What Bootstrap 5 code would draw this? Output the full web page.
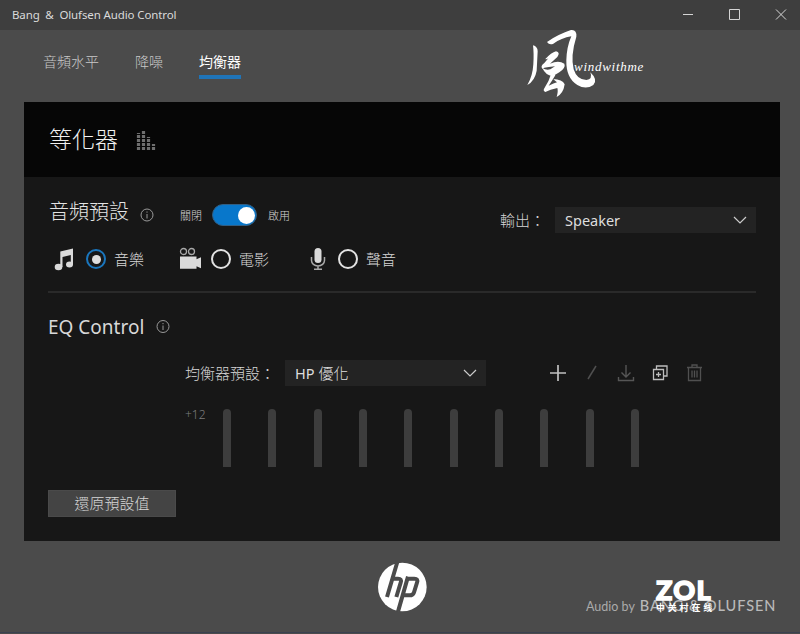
<!DOCTYPE html>
<html lang="zh-Hant">
<head>
<meta charset="utf-8">
<meta name="viewport" content="width=device-width, initial-scale=1">
<title>Bang &amp; Olufsen Audio Control</title>
<link rel="stylesheet" href="https://cdn.jsdelivr.net/npm/bootstrap@5.3.0/dist/css/bootstrap.min.css">
<style>
  body{width:800px;height:634px;overflow:hidden;background:#4b4b4b;color:#d6d6d6;font-family:"Noto Sans","Noto Sans CJK TC",sans-serif;font-size:15px;line-height:1;font-weight:300}
  svg{display:block;flex:none}
  .titlebar{height:30px;background:#3e3e3e;font-size:11.5px;padding:0 13px 0 12px;font-weight:400;color:#dadada}
  .titlebar .caption{letter-spacing:-.12px}
  .controls{gap:35px}
  .tabs{height:72px;padding:23px 0 0 43px;gap:36px;font-size:14px}
  .tabs .nav-link{padding:2px 0 6px;color:#c9c9c9;border-bottom:4px solid transparent;line-height:14px;height:26px}
  .tabs .nav-link.active{color:#fff;border-color:#1f74b8;font-weight:400}
  .panel{width:756px;height:439px;margin-left:24px;background:#171717}
  .panel-head{height:75px;background:#060606;padding-left:25px;gap:18px}
  .panel-head h1{font-size:23px;font-weight:300;color:#f2f2f2;line-height:1}
  .panel-body{padding:25px 24px 0}
  .preset-row{height:32px}
  .preset-row h2,.eq-title h2{font-size:20px;font-weight:300;color:#e4e4e4;line-height:1}
  .preset-row h2{padding-left:1px}
  .eq-title h2{font-size:19px;font-weight:400;color:#d8d8d8}
  .switch-group{padding-top:2px}
  .switch-group .info{margin:0 22px 0 11px}
  .tiny{font-size:11px;color:#d4d4d4}
  .toggle{width:45px;height:22px;border-radius:11px;background:#0877cb;border:1px solid #315e83;padding-right:1px;margin:0 11px 0 10px}
  .toggle span{width:17px;height:17px;border-radius:50%;background:#fff}
  .output{padding-top:5px;gap:10px}
  .pick{width:201px;height:26px;background:#232323;color:#dedede;padding:0 9px 0 10px}
  .pick .latin{font-weight:400;font-size:14.5px}
  .options{height:24px;margin-top:13px;padding-left:6px}
  .ring{width:20px;height:20px;border-radius:50%;border:2px solid #e2e2e2}
  .ring.on{border-color:#1a76bd;margin-left:12px}
  .ring.on::after{content:"";width:9px;height:9px;border-radius:50%;background:#dedede}
  .cam{margin-left:35px;margin-right:8px}
  .mic{margin-left:41px;margin-right:12px}
  .rule{height:2px;background:#2a2a2a;margin-top:20px}
  .eq-title{height:24px;margin-top:22px;gap:12px}
  .eq-row{height:26px;margin-top:21px;padding-left:137px}
  .eq-row .pick{margin-left:10px}
  .tools{margin-left:62px}
  .sliders{height:58px;margin-top:23px;padding-left:137px}
  .sliders .top-mark{width:38px;color:#7d7d7d;font-size:12px;line-height:12px}
  .bars{width:416px}
  .bars span{width:8px;height:58px;background:#3d3d3d;border-radius:4px 4px 0 0}
  .restore{width:128px;height:27px;margin-top:23px;border-radius:0;background:#444;border:1px solid #4a4a4a;color:#d6d6d6;font-size:15px;line-height:1;font-weight:300;padding:0}
  .footer-area{height:92px;border-bottom:1px solid #3b4150;padding:9px 0 0 2px}
  .wind-mark{position:absolute;left:510px;top:20px}
  .wind-text{position:absolute;left:574px;top:60px;font:italic 400 13px/14px "Liberation Serif",serif;color:#fff;letter-spacing:.72px}
  .credit{position:absolute;left:586px;top:598px;font:400 12.5px/16px Lato,sans-serif;color:#aaa;white-space:nowrap}
  .credit b{font-weight:500;font-size:14.5px;letter-spacing:.95px;color:#b9b9b9;margin-left:2px}
  .zol{position:absolute;left:656px;top:576px;color:#fff;width:60px}
  .zol strong{display:block;font:900 27px/27px Lato,sans-serif;-webkit-text-stroke:1.5px #fff;letter-spacing:1.3px}
  .zol small{display:block;font:700 9px/10px "Noto Sans CJK SC",sans-serif;letter-spacing:2.8px;white-space:nowrap}
</style>
<script src="https://cdn.jsdelivr.net/npm/bootstrap@5.3.0/dist/js/bootstrap.bundle.min.js"></script>
</head>
<body class="position-relative">
<header class="titlebar d-flex align-items-center justify-content-between">
  <span class="caption">Bang &nbsp;&amp;&nbsp; Olufsen Audio Control</span>
  <div class="controls d-flex align-items-center">
    <svg width="12" height="12" viewBox="0 0 12 12" stroke="#d5d5d5"><path d="M2 5.500h10"/></svg>
    <svg width="12" height="12" viewBox="0 0 12 12" fill="none" stroke="#d5d5d5"><path d="M1.500 .5h10v10h-10z"/></svg>
    <svg width="12" height="12" viewBox="0 0 12 12" stroke="#d5d5d5"><path d="M1 .5l10 10M11 .5l-10 10"/></svg>
  </div>
</header>
<nav class="tabs nav flex-nowrap align-items-start">
  <a class="nav-link">音頻水平</a>
  <a class="nav-link">降噪</a>
  <a class="nav-link active">均衡器</a>
</nav>
<main class="panel">
  <div class="panel-head d-flex align-items-center">
    <h1 class="mb-0">等化器</h1>
    <svg width="20" height="22" viewBox="0 0 20 22" fill="none" stroke="#6e6e6e" stroke-width="3.200" stroke-dasharray="3 1"><path d="M2.500 21V4M7.500 21V1M12.500 21V8M17.500 21v-6"/></svg>
  </div>
  <div class="panel-body">
    <div class="preset-row d-flex justify-content-between align-items-start">
      <div class="d-flex align-items-start">
        <h2 class="mb-0">音頻預設</h2>
        <div class="switch-group d-flex align-items-center">
          <svg class="info" width="18" height="20" viewBox="2 0 18 20" fill="none" stroke="#999"><circle cx="9" cy="10" r="6"/><path d="M9 9v4.500M9 6.500v1.200"/></svg>
          <span class="tiny">關閉</span>
          <div class="toggle d-flex align-items-center justify-content-end"><span></span></div>
          <span class="tiny">啟用</span>
        </div>
      </div>
      <div class="output d-flex align-items-center">
        <span>輸出：</span>
        <div class="pick d-flex align-items-center justify-content-between"><span class="latin">Speaker</span><svg width="14" height="8" viewBox="0 0 14 8" fill="none" stroke="#ccc" stroke-width="1.200"><path d="M1 1l6 6 6-6"/></svg></div>
      </div>
    </div>
    <div class="options d-flex align-items-center">
      <svg width="20" height="23" viewBox="0 0 20 23"><g fill="#dadada"><ellipse cx="4.500" cy="19" rx="3.800" ry="3.300"/><ellipse cx="15.500" cy="16.500" rx="3.500" ry="3"/><path d="M6.300 3.500L19 .5v16h-2.200V7L8.500 9v10H6.300z"/></g></svg>
      <span class="ring on d-flex align-items-center justify-content-center me-2"></span><span>音樂</span>
      <svg class="cam" width="24" height="24" viewBox="0 0 24 24" fill="none"><g stroke="#a8a8a8" stroke-width="1.300"><circle cx="4.500" cy="4.500" r="3"/><circle cx="12.500" cy="4.500" r="3"/></g><path fill="#dadada" d="M1 9.500h16.500v2.700l4.500-2v11l-4.500-2v2.500H1z"/></svg>
      <span class="ring me-2"></span><span>電影</span>
      <svg class="mic" width="16" height="24" viewBox="0 0 16 24" fill="none"><rect x="4.500" y="1" width="7" height="15" rx="3.500" fill="#dadada"/><path stroke="#aaa" stroke-width="1.500" d="M1.500 10v3.500a6.500 5.500 0 0 0 13 0V10M8 19v3M4 22.200h8"/></svg>
      <span class="ring me-2"></span><span>聲音</span>
    </div>
    <div class="rule"></div>
    <div class="eq-title d-flex align-items-center">
      <h2 class="mb-0">EQ Control</h2>
      <svg width="14" height="14" viewBox="0 0 14 14" fill="none" stroke="#999"><circle cx="7" cy="6.500" r="6"/><path d="M7 5.500V10M7 3v1.200"/></svg>
    </div>
    <div class="eq-row d-flex align-items-center">
      <span class="text-nowrap">均衡器預設：</span>
      <div class="pick d-flex align-items-center justify-content-between"><span><span class="latin">HP</span> 優化</span><svg width="14" height="8" viewBox="0 0 14 8" fill="none" stroke="#ccc" stroke-width="1.200"><path d="M1 1l6 6 6-6"/></svg></div>
      <svg class="tools" width="160" height="24" viewBox="0 0 160 24" fill="none">
        <path stroke="#c0c0c0" stroke-width="1.700" d="M2 12h16M10 4v16"/>
        <path stroke="#505050" stroke-width="1.500" d="M40 18l8-13"/>
        <path stroke="#565656" stroke-width="1.400" d="M78 4v12M73.500 11.500L78 16l4.500-4.500M70.500 16v3.500h15V16"/>
        <path stroke="#bdbdbd" stroke-width="1.300" d="M105.500 8.500h10v10h-10zM108.500 8V5h10.500v10h-3.500M110.500 11v5M108 13.500h5"/>
        <path stroke="#505050" stroke-width="1.300" d="M139 6.500h15M144 6V4h5v2M140.500 6.500v13h12v-13M144 9.500v7M146.500 9.500v7M149 9.500v7"/>
      </svg>
    </div>
    <div class="sliders d-flex align-items-start">
      <span class="top-mark">+12</span>
      <div class="bars d-flex justify-content-between"><span></span><span></span><span></span><span></span><span></span><span></span><span></span><span></span><span></span><span></span></div>
    </div>
    <button class="restore btn d-block">還原預設值</button>
  </div>
</main>
<footer class="footer-area d-flex justify-content-center">
  <svg width="80" height="75" viewBox="-12 0 240 225" role="img" aria-label="hp"><circle cx="112" cy="111" r="73" fill="#fff"/><path fill="none" stroke="#4b4b4b" stroke-width="12" d="M97 36L66 141M82 86h17q12 0 8 12L94 141M129 80l-30 105M127 86h21q12 0 8 12l-9 29q-3 9-13 9h-19"/></svg>
</footer>
<svg class="wind-mark" width="100" height="85" viewBox="0 0 300 255" fill="#fff" role="img" aria-label="風">
  <path d="M69 76q14 4 14 18l-3 58q-5 30-28 43 16-26 18-62 2-34-1-57z"/>
  <path d="M111 66q30-22 72-36 18-2 16 20-18 58-8 98 10 32 38 32 20-2 12-23 24 23 9 38-22 15-48 0-34-20-33-74 1-40 15-72-30 5-54 22-12 5-19-5z"/>
  <path d="M106 117q18-19 32-23 14 3 4 17l-22 20q26-12 43 0 5 12-15 26l-20 12q-22-4-31-25 12 8 24 4l14-9q-28 2-38 7-7-8 6-17l12-14q-6 4-9 2z"/>
  <path d="M124 160l12 6q-12 20-20 31 16-8 25-10l-12-10q28 1 35 16-4 28-24 38 5-17 2-27-22 4-36 12-8-3-3-11 14-20 21-45z"/>
</svg>
<span class="wind-text">windwithme</span>
<div class="credit">Audio by <b>BANG &amp; OLUFSEN</b></div>
<div class="zol"><strong>ZOL</strong><small>中关村在线</small></div>
</body>
</html>
